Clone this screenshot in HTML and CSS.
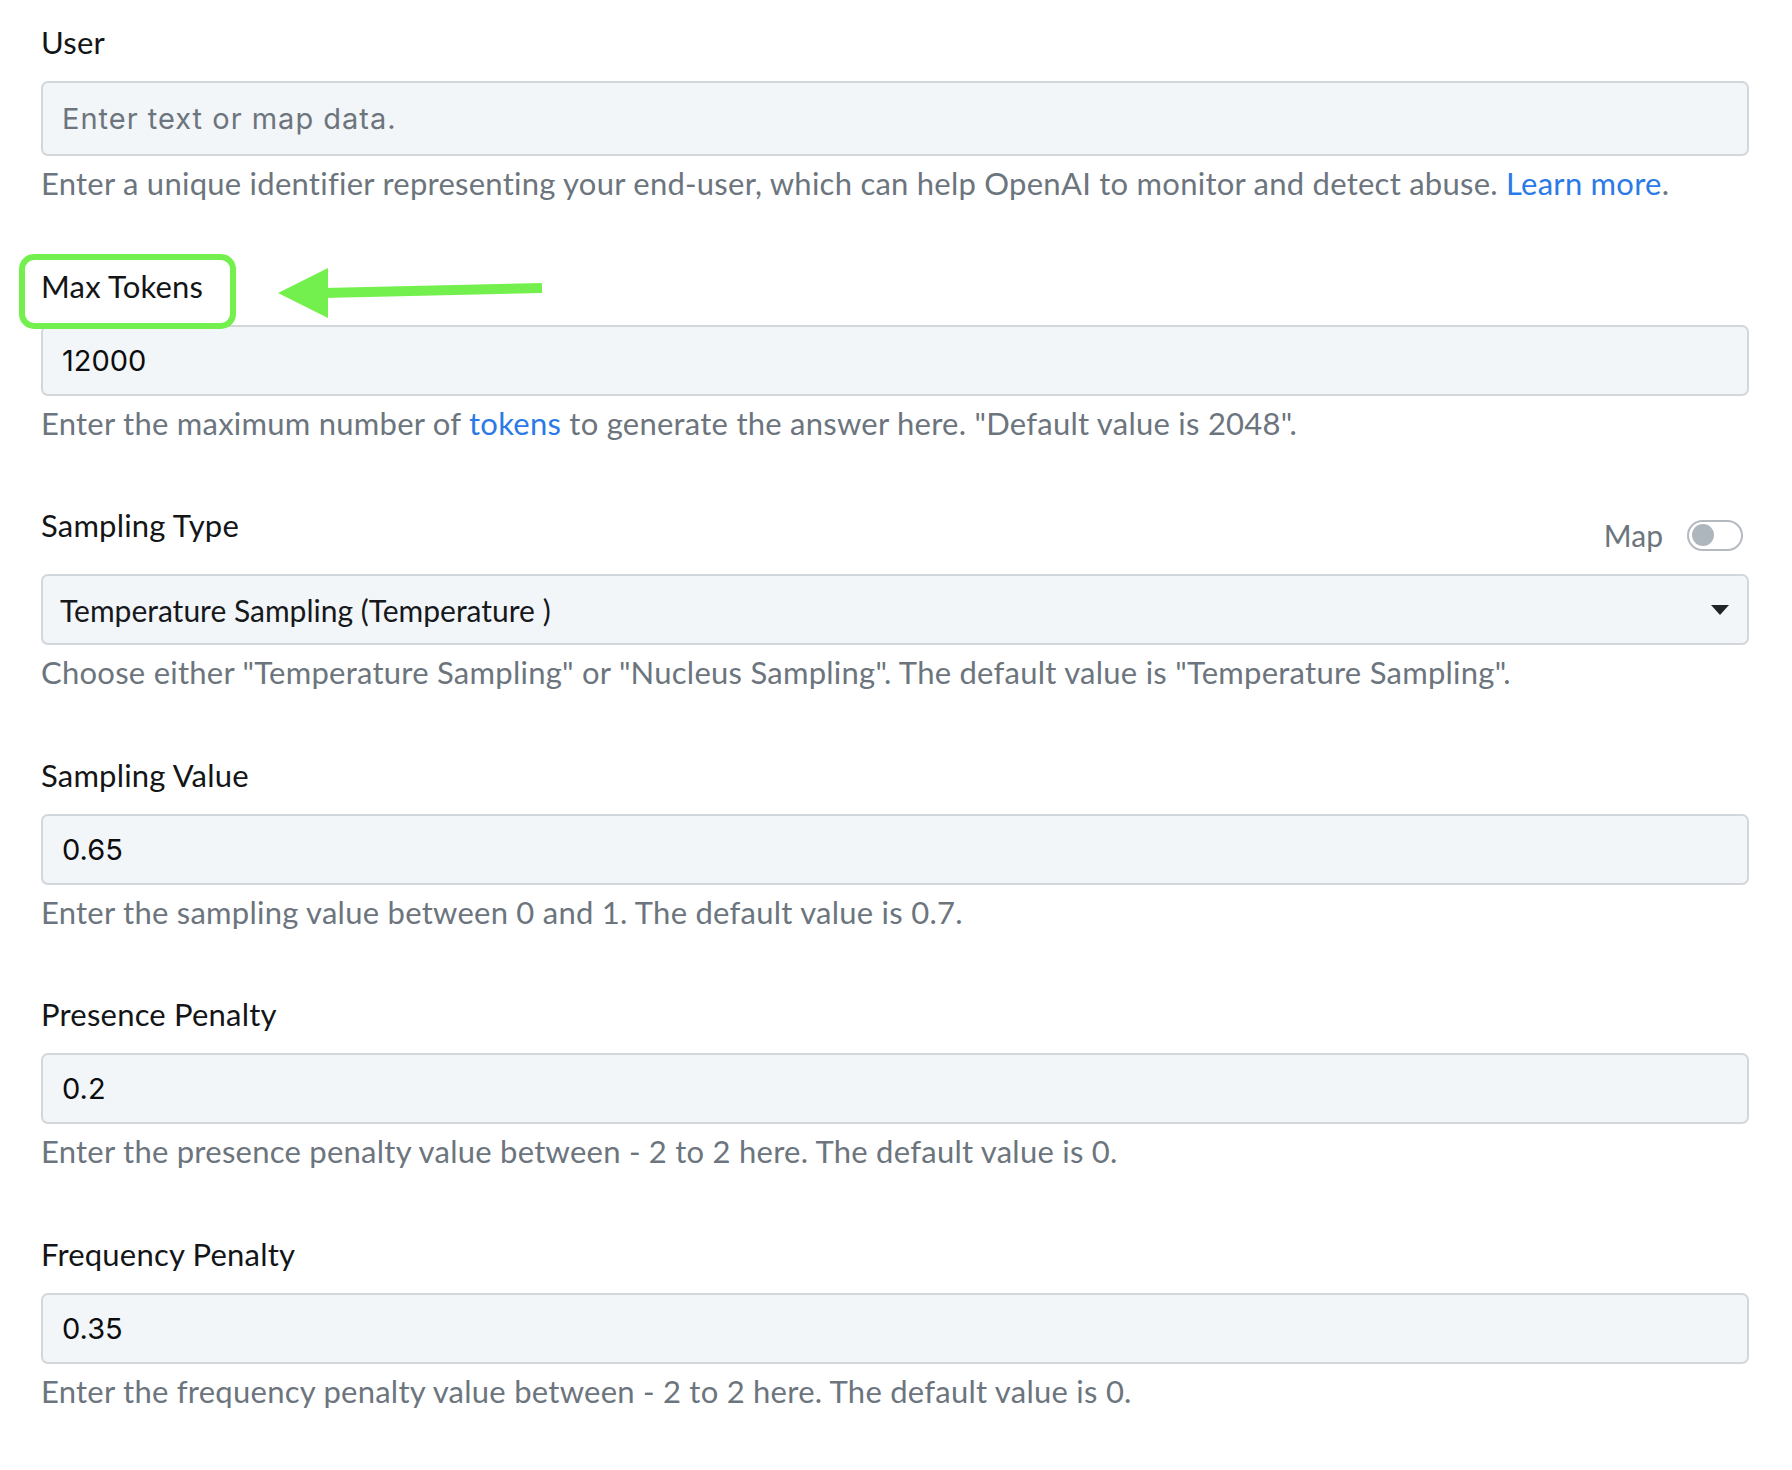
FILE: index.html
```html
<!DOCTYPE html>
<html lang="en">
<head>
    <meta charset="UTF-8">
    <title>Model Settings</title>
    <link rel="stylesheet" href="styles.css">
</head>
<body>
    <div class="form">
        <!-- user -->
        <div class="field">
            <div class="label-row"><label class="label">User</label></div>
            <input class="input input-tall" type="text" placeholder="Enter text or map data.">
            <p class="help">Enter a unique identifier representing your end-user, which can help OpenAI to monitor and detect abuse. <a href="#">Learn more</a>.</p>
        </div>

        <!-- max tokens, with annotation -->
        <div class="field">
            <div class="label-row">
                <label class="label highlight">Max Tokens
                    <svg class="arrow" width="280" height="60" viewBox="0 0 280 60">
                        <polygon points="0,30 50,5 50,55" fill="#74f04e"/>
                        <line x1="45" y1="30" x2="264" y2="25" stroke="#74f04e" stroke-width="10"/>
                    </svg>
                </label>
            </div>
            <input class="input" type="text" value="12000">
            <p class="help">Enter the maximum number of <a href="#">tokens</a> to generate the answer here. "Default value is 2048".</p>
        </div>

        <!-- sampling type -->
        <div class="field">
            <div class="label-row label-row-map">
                <label class="label">Sampling Type</label>
                <div class="map-switch">
                    <span>Map</span>
                    <span class="switch"><span class="knob"></span></span>
                </div>
            </div>
            <div class="input select">
                <span>Temperature Sampling (Temperature )</span>
                <svg width="18" height="10" viewBox="0 0 18 10"><polygon points="0,0 18,0 9,10" fill="#212529"/></svg>
            </div>
            <p class="help">Choose either "Temperature Sampling" or "Nucleus Sampling". The default value is "Temperature Sampling".</p>
        </div>

        <div class="field">
            <div class="label-row"><label class="label">Sampling Value</label></div>
            <input class="input" type="text" value="0.65">
            <p class="help">Enter the sampling value between 0 and 1. The default value is 0.7.</p>
        </div>

        <div class="field">
            <div class="label-row"><label class="label">Presence Penalty</label></div>
            <input class="input" type="text" value="0.2">
            <p class="help">Enter the presence penalty value between - 2 to 2 here. The default value is 0.</p>
        </div>

        <div class="field">
            <div class="label-row"><label class="label">Frequency Penalty</label></div>
            <input class="input" type="text" value="0.35">
            <p class="help">Enter the frequency penalty value between - 2 to 2 here. The default value is 0.</p>
        </div>
    </div>
</body>
</html>
```

FILE: styles.css
```css
body {
    margin: 0;
    background: #ffffff;
    font-family: Lato, "Noto Sans", sans-serif;
    color: #212529;
}

.form {
    padding: 25px 43px 0 41px;
    display: flex;
    flex-direction: column;
    gap: 68.5px;
}

.field {
    display: flex;
    flex-direction: column;
}

.label-row {
    display: flex;
    justify-content: space-between;
    align-items: center;
    height: 34px;
    margin-bottom: 22px;
}
.label-row-map {
    margin-bottom: 32px;
    align-items: flex-start;
}

.label {
    font-size: 31px;
    line-height: 34px;
    letter-spacing: 0.2px;
    color: #131517;
    position: relative;
}

/* green annotation box */
.highlight::before {
    content: "";
    position: absolute;
    left: -22px;
    top: -15px;
    right: -33px;
    bottom: -26px;
    border: 6px solid #74f04e;
    border-radius: 15px;
}
.arrow {
    position: absolute;
    left: 237px;
    top: -6px;
}

.input {
    box-sizing: border-box;
    width: 100%;
    height: 71px;
    margin: 0;
    border: 2px solid #d2d7dc;
    border-radius: 7px;
    background: #f3f6f9;
    padding: 0 19px;
    font-family: Inter, Roboto, sans-serif;
    font-size: 29px;
    color: #0d0d0d;
    outline: none;
}
.input::placeholder {
    color: #6c757d;
    letter-spacing: 1px;
}
.input-tall { height: 75px; }

.select {
    display: flex;
    align-items: center;
    justify-content: space-between;
    padding: 0 18px 0 17px;
    font-family: Lato, "Noto Sans", sans-serif;
    font-size: 30px;
    color: #16181b;
}

.help {
    margin: 10px 0 0;
    font-size: 31px;
    line-height: 34px;
    letter-spacing: 0.25px;
    color: #6c757d;
}
.help a {
    color: #2b7ae8;
    text-decoration: none;
}

.map-switch {
    display: flex;
    align-items: center;
    gap: 24px;
    margin-top: 9px;
    margin-right: 6px;
    font-size: 30px;
    color: #6c757d;
}
.switch {
    box-sizing: border-box;
    width: 56px;
    height: 31px;
    border: 2px solid #b4bac0;
    border-radius: 16px;
    background: #fff;
    display: flex;
    align-items: center;
    padding-left: 3px;
}
.knob {
    width: 22px;
    height: 22px;
    border-radius: 50%;
    background: #adb5bd;
}
```
